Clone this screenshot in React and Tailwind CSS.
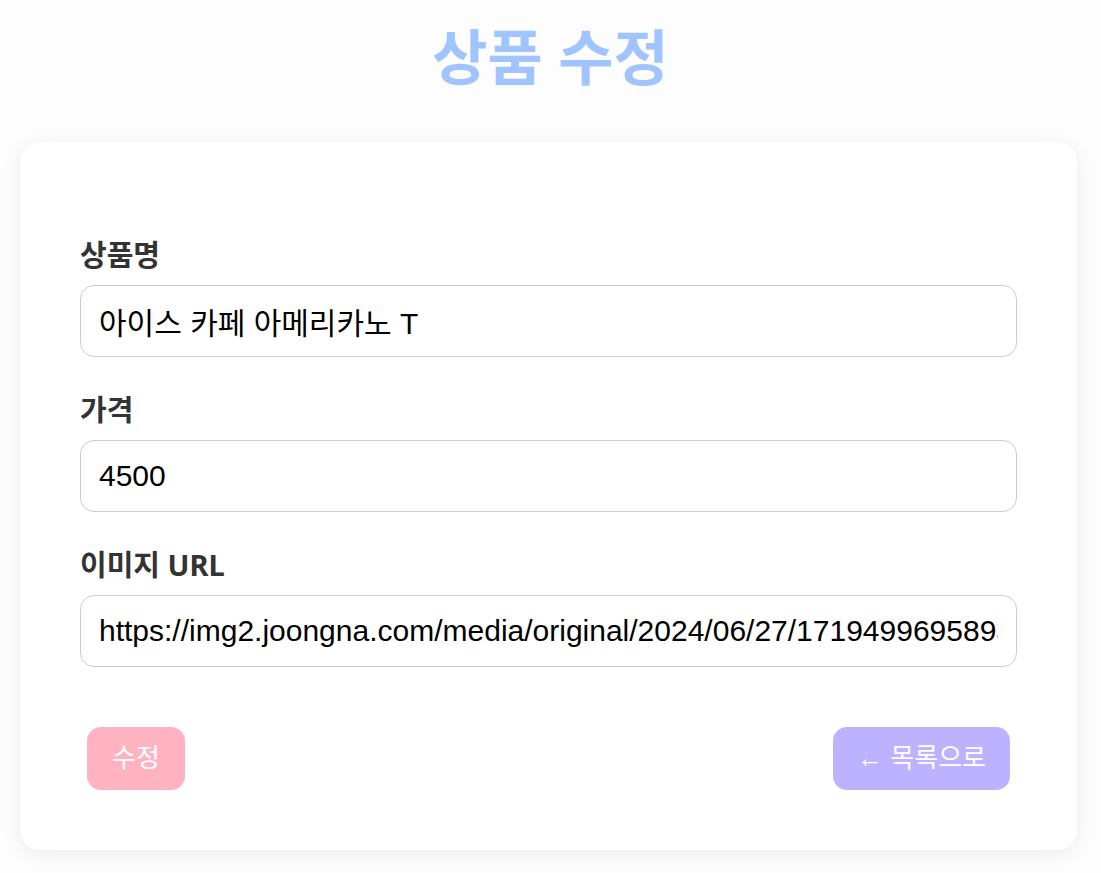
import React, { useState } from 'react';

function Field({ label, value, onChange }) {
  return (
    <div className="flex flex-col">
      <label className="mb-[12px] text-[29px] font-bold leading-[36px] text-[#333] font-['Noto_Sans','Noto_Sans_CJK_KR',sans-serif]">
        {label}
      </label>
      <input
        className="h-[72px] w-full rounded-[14px] border border-[#ccc] bg-white px-[18px] text-[30px] text-black outline-none font-['Liberation_Sans','Noto_Sans_CJK_KR',sans-serif]"
        value={value}
        onChange={(e) => onChange(e.target.value)}
      />
    </div>
  );
}

export default function App() {
  const [name, setName] = useState('아이스 카페 아메리카노 T');
  const [price, setPrice] = useState('4500');
  const [url, setUrl] = useState('https://img2.joongna.com/media/original/2024/06/27/1719499695893sOL_TMQ5G.jpg');

  return (
    <div className="min-h-screen bg-[#fdfdfd] font-['Noto_Sans','Noto_Sans_CJK_KR',sans-serif]">
      {/* title */}
      <div className="flex h-[142px] justify-center pt-[14px]">
        <h1 className="text-[60px] font-bold leading-[86px] text-[#a0c4ff]">상품 수정</h1>
      </div>

      {/* form card */}
      <div className="ml-[20px] w-[1057px] rounded-[20px] bg-white px-[60px] pt-[95px] pb-[60px] shadow-[0_4px_20px_rgba(0,0,0,0.07)]">
        <div className="flex flex-col gap-[35px]">
          <Field label="상품명" value={name} onChange={setName} />
          <Field label="가격" value={price} onChange={setPrice} />
          <Field label="이미지 URL" value={url} onChange={setUrl} />
        </div>

        <div className="mt-[60px] flex justify-between px-[7px]">
          <button className="h-[63px] rounded-[14px] bg-[#ffb3c1] px-[25px] text-[26px] text-white font-['Liberation_Sans','Noto_Sans_CJK_KR',sans-serif]">
            수정
          </button>
          <button className="h-[63px] rounded-[14px] bg-[#bdb2ff] px-[24px] text-[26px] text-white font-['Liberation_Sans','Noto_Sans_CJK_KR',sans-serif]">
            ← 목록으로
          </button>
        </div>
      </div>
    </div>
  );
}
